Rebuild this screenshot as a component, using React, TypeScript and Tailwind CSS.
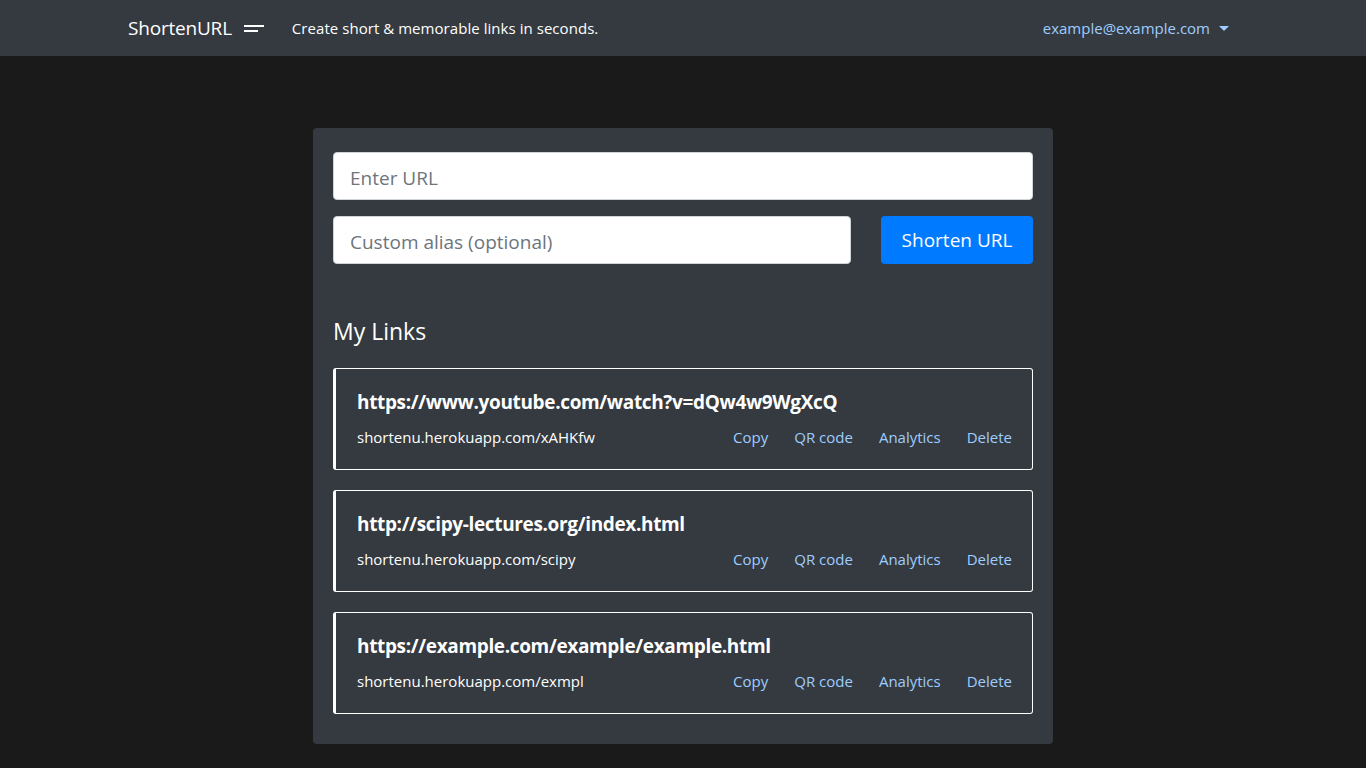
import React from "react";

const links = [
  { url: "https://www.youtube.com/watch?v=dQw4w9WgXcQ", short: "shortenu.herokuapp.com/xAHKfw" },
  { url: "http://scipy-lectures.org/index.html", short: "shortenu.herokuapp.com/scipy" },
  { url: "https://example.com/example/example.html", short: "shortenu.herokuapp.com/exmpl" },
];

function LinkCard({ url, short }: { url: string; short: string }) {
  return (
    <div className="border border-white border-l-[3px] rounded-[3px] pl-[21px] pr-[20px] pt-[21px] pb-[21px]">
      <h5 className="text-[19px] font-bold text-white leading-[24px] tracking-[-0.35px]">{url}</h5>
      <div className="flex items-center mt-[12px] text-[15px] leading-[22px]">
        <span className="text-white flex-1">{short}</span>
        <div className="flex gap-[26px] text-[#9fcdff]">
          <a href="#">Copy</a>
          <a href="#">QR code</a>
          <a href="#">Analytics</a>
          <a href="#">Delete</a>
        </div>
      </div>
    </div>
  );
}

export default function App() {
  return (
    <div className="min-h-[768px] bg-[#1a1a1a] font-['Open_Sans',sans-serif]">
      <nav className="h-[56px] bg-[#343a40]">
        <div className="w-[1110px] mx-auto h-full flex items-center">
          <a href="#" className="text-[19px] text-white tracking-[-0.2px]">ShortenURL</a>
          <div className="ml-[12px] flex flex-col gap-[3px] mt-[1px]">
            <span className="block w-[20px] h-[2px] bg-white" />
            <span className="block w-[14px] h-[2px] bg-white" />
          </div>
          <span className="ml-[28px] text-[15px] text-white tracking-[0.05px]">
            Create short &amp; memorable links in seconds.
          </span>
          <div className="ml-auto mr-[9px] flex items-center text-[15px] text-[#9fcdff]">
            example@example.com
            <span className="ml-[9px] w-0 h-0 border-l-[5px] border-r-[5px] border-t-[5px] border-l-transparent border-r-transparent border-t-[#9fcdff]" />
          </div>
        </div>
      </nav>
      <main className="pt-[72px] pb-[24px]">
        <div className="w-[740px] mx-auto bg-[#343a40] rounded-[4px] px-[20px] pt-[24px] pb-[30px]">
          <input
            className="block w-full h-[48px] bg-white rounded-[4px] border border-[#ced4da] px-[16px] pt-[3px] text-[19px] text-[#495057] placeholder:text-[#6c757d] outline-none"
            placeholder="Enter URL"
          />
          <div className="flex items-center mt-[16px] gap-[30px]">
            <input
              className="block flex-1 h-[48px] bg-white rounded-[4px] border border-[#ced4da] px-[16px] pt-[3px] text-[19px] text-[#495057] placeholder:text-[#6c757d] outline-none"
              placeholder="Custom alias (optional)"
            />
            <button className="w-[152px] h-[48px] bg-[#007bff] text-white text-[19px] rounded-[4px]">
              Shorten URL
            </button>
          </div>
          <h4 className="text-[23px] text-white mt-[52px] leading-[30px]">My Links</h4>
          <div className="flex flex-col gap-[20px] mt-[22px]">
            {links.map((l) => (
              <LinkCard key={l.short} {...l} />
            ))}
          </div>
        </div>
      </main>
    </div>
  );
}
